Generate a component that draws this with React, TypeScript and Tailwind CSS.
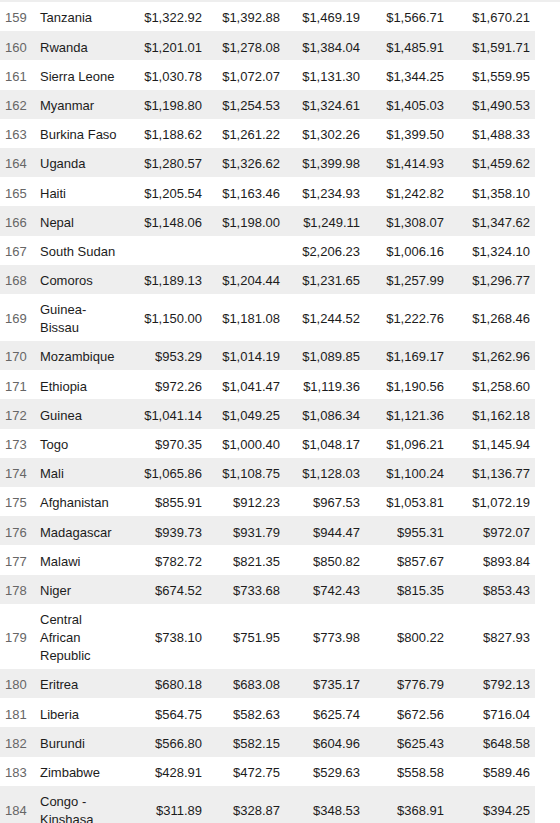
const ROWS: [number, string, string, string, string, string, string][] = [
  [159, "Tanzania", "$1,322.92", "$1,392.88", "$1,469.19", "$1,566.71", "$1,670.21"],
  [160, "Rwanda", "$1,201.01", "$1,278.08", "$1,384.04", "$1,485.91", "$1,591.71"],
  [161, "Sierra Leone", "$1,030.78", "$1,072.07", "$1,131.30", "$1,344.25", "$1,559.95"],
  [162, "Myanmar", "$1,198.80", "$1,254.53", "$1,324.61", "$1,405.03", "$1,490.53"],
  [163, "Burkina Faso", "$1,188.62", "$1,261.22", "$1,302.26", "$1,399.50", "$1,488.33"],
  [164, "Uganda", "$1,280.57", "$1,326.62", "$1,399.98", "$1,414.93", "$1,459.62"],
  [165, "Haiti", "$1,205.54", "$1,163.46", "$1,234.93", "$1,242.82", "$1,358.10"],
  [166, "Nepal", "$1,148.06", "$1,198.00", "$1,249.11", "$1,308.07", "$1,347.62"],
  [167, "South Sudan", "", "", "$2,206.23", "$1,006.16", "$1,324.10"],
  [168, "Comoros", "$1,189.13", "$1,204.44", "$1,231.65", "$1,257.99", "$1,296.77"],
  [169, "Guinea-Bissau", "$1,150.00", "$1,181.08", "$1,244.52", "$1,222.76", "$1,268.46"],
  [170, "Mozambique", "$953.29", "$1,014.19", "$1,089.85", "$1,169.17", "$1,262.96"],
  [171, "Ethiopia", "$972.26", "$1,041.47", "$1,119.36", "$1,190.56", "$1,258.60"],
  [172, "Guinea", "$1,041.14", "$1,049.25", "$1,086.34", "$1,121.36", "$1,162.18"],
  [173, "Togo", "$970.35", "$1,000.40", "$1,048.17", "$1,096.21", "$1,145.94"],
  [174, "Mali", "$1,065.86", "$1,108.75", "$1,128.03", "$1,100.24", "$1,136.77"],
  [175, "Afghanistan", "$855.91", "$912.23", "$967.53", "$1,053.81", "$1,072.19"],
  [176, "Madagascar", "$939.73", "$931.79", "$944.47", "$955.31", "$972.07"],
  [177, "Malawi", "$782.72", "$821.35", "$850.82", "$857.67", "$893.84"],
  [178, "Niger", "$674.52", "$733.68", "$742.43", "$815.35", "$853.43"],
  [179, "Central African Republic", "$738.10", "$751.95", "$773.98", "$800.22", "$827.93"],
  [180, "Eritrea", "$680.18", "$683.08", "$735.17", "$776.79", "$792.13"],
  [181, "Liberia", "$564.75", "$582.63", "$625.74", "$672.56", "$716.04"],
  [182, "Burundi", "$566.80", "$582.15", "$604.96", "$625.43", "$648.58"],
  [183, "Zimbabwe", "$428.91", "$472.75", "$529.63", "$558.58", "$589.46"],
  [184, "Congo - Kinshasa", "$311.89", "$328.87", "$348.53", "$368.91", "$394.25"],
];

export default function App() {
  return (
    <div className="h-[823px] overflow-hidden bg-white font-['Liberation_Sans',Arial,sans-serif] text-[13px] leading-[18px] text-[#1c1c1c]">
      <div className="h-[2px] bg-[#eeeeee]" />
      <table className="w-[535px] table-fixed border-collapse">
        <colgroup>
          <col className="w-[35px]" />
          <col className="w-[90px]" />
          <col className="w-[82px]" />
          <col className="w-[78px]" />
          <col className="w-[80px]" />
          <col className="w-[84px]" />
          <col className="w-[86px]" />
        </colgroup>
        <tbody>
          {ROWS.map((r, i) => (
            <tr key={r[0]} className={i % 2 === 1 ? "bg-[#eeeeee]" : "bg-white"}>
              <td className="pt-[7.4px] pb-[3.8px] pl-[5px] align-middle text-[#666]">{r[0]}</td>
              <td className="pt-[7.4px] pb-[3.8px] px-[5px] align-middle">{r[1]}</td>
              {r.slice(2).map((v, j) => (
                <td key={j} className="pt-[7.4px] pb-[3.8px] pr-[5px] text-right align-middle whitespace-nowrap">{v}</td>
              ))}
            </tr>
          ))}
        </tbody>
      </table>
    </div>
  );
}
